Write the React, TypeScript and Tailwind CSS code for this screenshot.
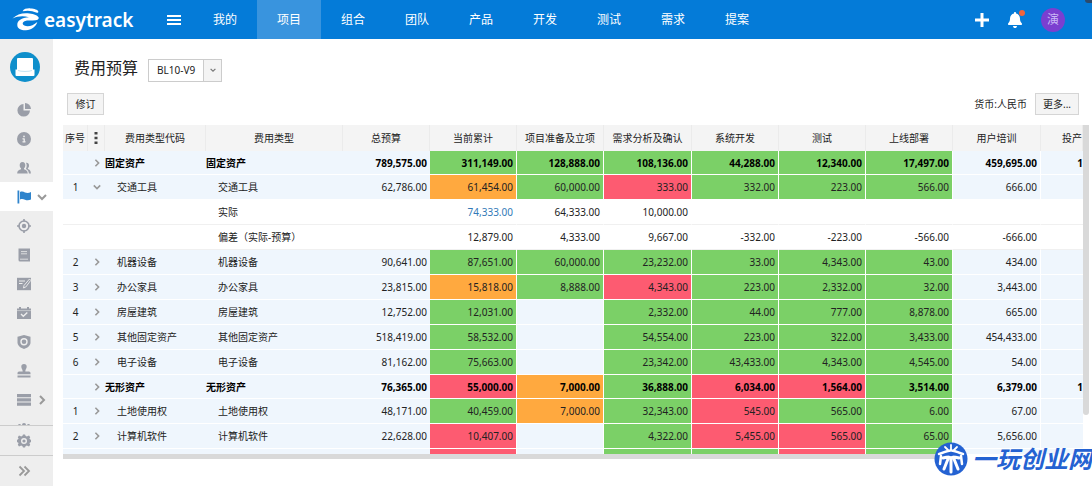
import React from 'react';
import { FaBell, FaCircleInfo } from 'react-icons/fa6';

type Tone = 'g' | 'o' | 'r' | '';

interface BudgetRow {
  kind: 'category' | 'item' | 'detail';
  no?: string;
  name: string;
  open?: boolean;
  total?: string;
  values: string[];
  tones?: Tone[];
  tail?: string;
}

const navItems = ['我的', '项目', '组合', '团队', '产品', '开发', '测试', '需求', '提案'];

const stages = ['当前累计', '项目准备及立项', '需求分析及确认', '系统开发', '测试', '上线部署', '用户培训'];

const rows: BudgetRow[] = [
  { kind: 'category', name: '固定资产', total: '789,575.00', values: ['311,149.00', '128,888.00', '108,136.00', '44,288.00', '12,340.00', '17,497.00', '459,695.00'], tones: ['g', 'g', 'g', 'g', 'g', 'g', ''], tail: '1' },
  { kind: 'item', no: '1', name: '交通工具', open: true, total: '62,786.00', values: ['61,454.00', '60,000.00', '333.00', '332.00', '223.00', '566.00', '666.00'], tones: ['o', 'g', 'r', 'g', 'g', 'g', ''] },
  { kind: 'detail', name: '实际', values: ['74,333.00', '64,333.00', '10,000.00', '', '', '', ''] },
  { kind: 'detail', name: '偏差（实际-预算）', values: ['12,879.00', '4,333.00', '9,667.00', '-332.00', '-223.00', '-566.00', '-666.00'] },
  { kind: 'item', no: '2', name: '机器设备', total: '90,641.00', values: ['87,651.00', '60,000.00', '23,232.00', '33.00', '4,343.00', '43.00', '434.00'], tones: ['g', 'g', 'g', 'g', 'g', 'g', ''] },
  { kind: 'item', no: '3', name: '办公家具', total: '23,815.00', values: ['15,818.00', '8,888.00', '4,343.00', '223.00', '2,332.00', '32.00', '3,443.00'], tones: ['o', 'g', 'r', 'g', 'g', 'g', ''] },
  { kind: 'item', no: '4', name: '房屋建筑', total: '12,752.00', values: ['12,031.00', '', '2,332.00', '44.00', '777.00', '8,878.00', '665.00'], tones: ['g', '', 'g', 'g', 'g', 'g', ''] },
  { kind: 'item', no: '5', name: '其他固定资产', total: '518,419.00', values: ['58,532.00', '', '54,554.00', '223.00', '322.00', '3,433.00', '454,433.00'], tones: ['g', '', 'g', 'g', 'g', 'g', ''] },
  { kind: 'item', no: '6', name: '电子设备', total: '81,162.00', values: ['75,663.00', '', '23,342.00', '43,433.00', '4,343.00', '4,545.00', '54.00'], tones: ['g', '', 'g', 'g', 'g', 'g', ''] },
  { kind: 'category', name: '无形资产', total: '76,365.00', values: ['55,000.00', '7,000.00', '36,888.00', '6,034.00', '1,564.00', '3,514.00', '6,379.00'], tones: ['r', 'o', 'g', 'r', 'r', 'g', ''], tail: '1' },
  { kind: 'item', no: '1', name: '土地使用权', total: '48,171.00', values: ['40,459.00', '7,000.00', '32,343.00', '545.00', '565.00', '6.00', '67.00'], tones: ['g', 'o', 'g', 'r', 'g', 'g', ''] },
  { kind: 'item', no: '2', name: '计算机软件', total: '22,628.00', values: ['10,407.00', '', '4,322.00', '5,455.00', '565.00', '65.00', '5,656.00'], tones: ['r', '', 'g', 'r', 'r', 'g', ''] },
  { kind: 'item', name: '', values: ['', '', '', '', '', '', ''], tones: ['r', '', 'g', 'g', 'r', 'g', ''] },
];

const toneClass = (tone?: Tone) => {
  if (tone === 'g') return 'bg-[#7bd067]';
  if (tone === 'o') return 'bg-[#ffa93f]';
  if (tone === 'r') return 'bg-[#fd5b71]';
  return '';
};

const Chevron: React.FC<{ dir: 'right' | 'down'; className?: string }> = ({ dir, className = '' }) => (
  <svg viewBox="0 0 10 10" className={className} fill="none" stroke="currentColor" strokeWidth="2">
    <path d={dir === 'right' ? 'M3 1l4 4-4 4' : 'M1 3l4 4 4-4'} />
  </svg>
);

/* Sidebar glyphs, all drawn on a 14x14 grid */
const Glyph: React.FC<{ children: React.ReactNode; className?: string }> = ({ children, className = 'text-[#9a9ea8]' }) => (
  <svg viewBox="0 0 14 14" className={`size-3.5 shrink-0 ${className}`} fill="currentColor">
    {children}
  </svg>
);

const sideItems: { label: string; icon: React.ReactNode; active?: boolean; more?: boolean }[] = [
  { label: '概览', icon: <Glyph><path d="M6.5 1A6.3 6.3 0 1 0 13 7.6H6.5z" /><path d="M8 0a6.2 6.2 0 0 1 6 6H8z" /></Glyph> },
  { label: '信息', icon: <FaCircleInfo className="size-3.5 text-[#9a9ea8]" /> },
  { label: '成员', icon: <Glyph><path d="M5.5 1C7.5 1 8.3 2.3 8.3 4.2c0 1.5-.6 2.5-1.3 3.1v1c1.8.6 3.5 1.2 3.8 4.2H.2c.2-3 2-3.6 3.8-4.2v-1C3.3 6.7 2.7 5.7 2.7 4.2 2.7 2.3 3.5 1 5.5 1z" /><path d="M9 1.8c1.9-.3 3 .8 3 2.6 0 1.3-.5 2.2-1.1 2.7v1c1.6.5 2.9 1.4 3 4.4h-2c-.2-2.2-1.1-3.7-3-4.5.9-1.6 1.3-4 .1-6.2z" /></Glyph> },
  { label: '计划', active: true, more: true, icon: <Glyph className="text-[#2f84cc]"><path d="M.5 .5h1.800v13H.5z" /><path d="M3 2c2-1 3.500-.3 5 .4 2 .8 4 .6 6-.4v7.500c-2 .9-4 1-6 .2-1.600-.7-3.200-1-5-.2z" /></Glyph> },
  { label: '目标', icon: <Glyph><circle cx="7" cy="7" r="5" fill="none" stroke="currentColor" strokeWidth="1.6" /><circle cx="7" cy="7" r="2.2" /><path d="M6.2 0h1.6v2.5H6.2zM6.2 11.5h1.6V14H6.2zM0 6.2h2.5v1.6H0zM11.5 6.2H14v1.6h-2.5z" /></Glyph> },
  { label: '文档', icon: <Glyph><path d="M1.500 .5h11.500v13H3a1.500 1.500 0 0 1-1.500-1.500z" /><path d="M4 3.600h6M4 5.800h6M3 11.200h8" stroke="#eeeeee" strokeWidth=".8" /></Glyph> },
  { label: '报告', icon: <Glyph><path d="M0 .8h14v12.400H0z" /><path d="M2 4h6M2 6.500h3.500" stroke="#eeeeee" /><path d="M6.500 11l.5-2.500L12.500 2l1.300 1.300L8.800 10z" stroke="#eeeeee" strokeWidth=".9" /></Glyph> },
  { label: '日程', icon: <Glyph><path d="M0 2.500h2V1h2v1.500h6V1h2v1.500h2V13H0z" /><path d="M0 4.600h14" stroke="#eeeeee" strokeWidth=".5" /><path d="M4 8l2.300 2.200L10.300 6.600" fill="none" stroke="#eeeeee" strokeWidth="1.400" /></Glyph> },
  { label: '风险', icon: <Glyph><path d="M7 0l6.500 1.800V7.500C13.500 11 10 13 7 14 4 13 .5 11 .5 7.500V1.800z" /><circle cx="7" cy="6.800" r="3" fill="none" stroke="#eeeeee" strokeWidth="1.400" /></Glyph> },
  { label: '审批', icon: <Glyph><path d="M7 0a2.700 2.700 0 0 1 2.700 2.700C9.700 4.500 8.300 5 8.300 7.500H12a1.500 1.500 0 0 1 1.500 1.500v1.300H.5V9A1.500 1.500 0 0 1 2 7.500h3.700C5.700 5 4.300 4.500 4.300 2.700A2.700 2.700 0 0 1 7 0zM.5 11.500h13V13.500H.5z" /></Glyph> },
  { label: '费用', more: true, icon: <Glyph><path d="M0 1h14v3.300H0zM0 5.200h14v3.300H0zM0 9.400h14v3.300H0z" /></Glyph> },
  { label: '团队', icon: <Glyph><circle cx="7" cy="3" r="2" /><circle cx="2.5" cy="3.500" r="1.500" /><circle cx="11.5" cy="3.500" r="1.500" /><path d="M1 6h12v6H1z" /></Glyph> },
];

const Logo = () => (
  <a href="#" className="flex w-[155px] shrink-0 items-center gap-1 pl-3 text-white">
    <svg viewBox="0 0 28 23" className="h-[23px] w-7 shrink-0" fill="currentColor">
      <path d="M10.500 3.200C12 .8 15 .2 18.500.4c4 .2 7.200 1.200 7.800 3 .2.9-.4 1.500-1.400 1.400C20 2.600 16 2.200 10.500 3.200z" />
      <path d="M.5 10.500C5 5.800 11 4.600 17.500 5.400c4.500.6 8.500 2 9.200 4.200.4 1.600-1.200 2.500-3.200 2.700-4 .4-8-.3-11 1-2.200 1-2.400 3.200-.2 4.300 3.500 1.500 8.700.4 13-3.600-1.300 4.700-5.800 8-11.300 8.200-4.800.2-8.500-1.500-8.700-5C5 12.500 9.500 9.800 17 9.300 11.500 7.400 5.500 8 .5 10.500z" />
    </svg>
    <span className="text-[19px] leading-6 font-semibold">easytrack</span>
  </a>
);

const TopBar = () => (
  <header className="relative flex h-[39px] shrink-0 items-stretch bg-[#047bd8] text-white">
    <Logo />
    <button aria-label="菜单" className="flex w-[38px] items-center justify-center">
      <svg viewBox="0 0 14 12" className="h-3 w-3.5" fill="currentColor">
        <path d="M0 1h14v2H0zM0 5h14v2H0zM0 9h14v2H0z" />
      </svg>
    </button>
    <nav className="flex text-xs">
      {navItems.map((item) => (
        <a
          key={item}
          href="#"
          className={`flex w-16 items-center justify-center ${item === '项目' ? 'bg-[#3994de]' : ''}`}
        >
          {item}
        </a>
      ))}
    </nav>
    <div className="ml-auto flex items-center gap-[18px] pr-[27px]">
      <button aria-label="新建">
        <svg viewBox="0 0 14 14" className="size-3.5" fill="none" stroke="currentColor" strokeWidth="3">
          <path d="M7 0v14M0 7h14" />
        </svg>
      </button>
      <button aria-label="通知" className="relative">
        <FaBell className="size-4" />
        <span className="absolute -top-0.5 -right-0.5 size-1.5 rounded-full bg-[#f0643c]" />
      </button>
      <button className="flex size-6 items-center justify-center rounded-full bg-[#7b3fd0] text-xs text-[#c9b8f5]">演</button>
    </div>
    <span className="absolute top-0 right-0 h-[3px] w-[7px] rounded-bl bg-[#2c4a6b]" />
  </header>
);

const Sidebar = () => (
  <aside className="flex w-[53px] shrink-0 flex-col bg-[#eeeeee] text-[#999999]">
    <div className="flex h-14 shrink-0 items-center pl-2.5">
      <svg viewBox="0 0 30 30" className="size-[30px]">
        <circle cx="15" cy="15" r="15" fill="#0f8fcb" />
        <path d="M8 6h14a1 1 0 0 1 1 1V17.500h1.500V23a1 1 0 0 1-1 1h-17a1 1 0 0 1-1-1v-5.500H7V7a1 1 0 0 1 1-1z" fill="#fff" />
        <path d="M8 18.500c3 1.300 11 1.300 14 0" fill="none" stroke="#b5dcef" strokeWidth=".8" />
      </svg>
    </div>
    <nav className="min-h-0 flex-1 overflow-hidden">
      {sideItems.map((item) => (
        <a
          key={item.label}
          href="#"
          aria-label={item.label}
          className={`flex h-[29px] items-center gap-1.5 pl-[17px] ${item.active ? 'bg-white' : ''}`}
        >
          {item.icon}
          {item.more && <Chevron dir={item.active ? 'down' : 'right'} className="size-2.5 shrink-0" />}
        </a>
      ))}
    </nav>
    <button aria-label="设置" className="flex h-[30px] shrink-0 items-center border-t border-[#cccccc] pl-[17px]">
      <Glyph>
        <path fillRule="evenodd" d="M5.500 1.800L6 .5h2l.5 1.300 1.300.6L12 1.500l1.200 1.700-.8 1.600L14 6v2l-1.600 1 .8 1.800L12 12.500l-2.200-.9-1.300.6L8 13.500H6l-.5-1.300-1.300-.6-2.200.9-1.200-1.700L1.600 9 0 8V6l1.600-1.200-.8-1.600L2 1.500l2.200.9zM7 4a3 3 0 1 0 0 6 3 3 0 0 0 0-6z" />
        <circle cx="7" cy="7" r="1.600" />
      </Glyph>
    </button>
    <button aria-label="展开" className="flex h-[31px] shrink-0 items-center border-t border-[#cccccc] pl-[17px]">
      <svg viewBox="0 0 14 14" className="size-3.5" fill="none" stroke="currentColor" strokeWidth="1.800">
        <path d="M2.500 2.500L7 7 2.500 11.500M7.500 2.500L12 7l-4.500 4.500" />
      </svg>
    </button>
  </aside>
);

const BudgetTable = () => (
  <table className="w-full table-fixed border-separate border-spacing-0 text-[10px] leading-4">
    <colgroup>
      <col className="w-[25px]" />
      <col className="w-[17px]" />
      <col className="w-[101px]" />
      <col className="w-[137px]" />
      <col className="w-[87px]" />
      <col className="w-[87px]" />
      <col className="w-[87px]" />
      <col className="w-[88px]" />
      <col className="w-[87px]" />
      <col className="w-[87px]" />
      <col className="w-[87px]" />
      <col className="w-[88px]" />
      <col />
    </colgroup>
    <thead>
      <tr className="h-[26px] bg-[#f4f4f4] text-[#222222] *:border-r *:border-[#ebebeb] *:p-0 *:font-normal *:whitespace-nowrap">
        <th>序号</th>
        <th aria-label="列设置">
          <svg viewBox="0 0 4 12" className="mx-auto h-3 w-1" fill="#444444">
            <path d="M.5 0h3v2.600h-3zM.5 4.700h3v2.600h-3zM.5 9.400h3V12h-3z" />
          </svg>
        </th>
        <th>费用类型代码</th>
        <th>费用类型</th>
        <th>总预算</th>
        {stages.map((stage) => (
          <th key={stage}>{stage}</th>
        ))}
        <th className="text-right">投产</th>
      </tr>
    </thead>
    <tbody>
      {rows.map((row, i) => {
        const detail = row.kind === 'detail';
        const category = row.kind === 'category';
        return (
          <tr
            key={i}
            className={`*:border-b *:py-0 *:whitespace-nowrap ${category ? 'h-6 font-bold text-black' : 'h-[25px] text-[#222222]'} ${
              detail ? 'bg-white *:border-b-[#f0f0f0]' : 'bg-[#eff6fd] *:border-white'
            }`}
          >
            <td className="px-0 text-center">{row.no}</td>
            <td className="px-0">
              {!detail && row.name && (
                <Chevron dir={row.open ? 'down' : 'right'} className="mx-auto size-2 text-[#999999]" />
              )}
            </td>
            <td className={category ? 'pl-0' : 'pl-3'}>{!detail && row.name}</td>
            <td className={category ? 'pl-0' : 'pl-3'}>{row.name}</td>
            <td className="pr-[3px] text-right">{row.total}</td>
            {row.values.map((value, n) => (
              <td
                key={stages[n]}
                className={`border-r border-r-white pr-[3px] text-right ${toneClass(row.tones?.[n])}`}
              >
                {row.name === '实际' && n === 0 ? <a href="#" className="text-[#337ab7]">{value}</a> : value}
              </td>
            ))}
            <td className="text-right">{row.tail}</td>
          </tr>
        );
      })}
    </tbody>
  </table>
);

const Watermark = () => (
  <div className="absolute right-0 bottom-2.5 flex items-center gap-1 text-[#2462d2]">
    <svg viewBox="0 0 34 34" className="size-[34px]">
      <circle cx="17" cy="17" r="16.500" fill="currentColor" />
      <g fill="none" stroke="#fff" strokeLinecap="round">
        <path d="M5 12c5-1 7-3.500 12-3.500S24 11 29 12" strokeWidth="2.500" />
        <path d="M11 5l3 3M23 5l-3 3M17 3v5" strokeWidth="1.800" />
        <path d="M7 14l-1 8M27 14l1 8" strokeWidth="2.500" />
        <path d="M9 16c4-1.500 12-1.500 16 0M14 17l-4 10M20 17l4 10M17 17v13" strokeWidth="3" />
      </g>
      <circle cx="17" cy="12" r="2.200" fill="currentColor" />
    </svg>
    <span className="text-2xl leading-8 font-bold italic">一玩创业网</span>
  </div>
);

export default function App() {
  return (
    <div className="relative flex h-screen flex-col overflow-hidden bg-white font-['Noto_Sans','Noto_Sans_CJK_SC',sans-serif] text-[#222222]">
      <TopBar />
      <div className="flex min-h-0 flex-1">
        <Sidebar />
        <main className="flex min-w-0 flex-1 flex-col pl-2.5">
          <div className="flex h-[54px] shrink-0 items-center gap-2.5 pt-1 pl-[11px]">
            <h1 className="text-base leading-6">费用预算</h1>
            <div className="relative mt-1 flex h-[23px] w-[74px] border border-[#cccccc]">
              <select aria-label="版本" className="w-full appearance-none pr-5 pl-2 text-[10px] leading-4 outline-none">
                <option>BL10-V9</option>
              </select>
              <span className="pointer-events-none absolute inset-y-0 right-0 flex w-[18px] items-center justify-center border-l border-[#cccccc] bg-[#f4f4f4]">
                <Chevron dir="down" className="size-1.5 text-[#777777]" />
              </span>
            </div>
          </div>
          <div className="flex h-8 shrink-0 items-start justify-between pr-[13px] pl-1 text-[10px]">
            <button className="h-[22px] w-[37px] border border-[#d5d5d5] bg-[#f4f4f4]">修订</button>
            <div className="flex items-center gap-2">
              <span>货币:人民币</span>
              <button className="h-[22px] w-11 border border-[#d5d5d5] bg-[#f4f4f4]">更多...</button>
            </div>
          </div>
          <div className="mb-8 flex min-h-0 flex-1 flex-col">
            <div className="flex min-h-0 flex-1 pr-[3px]">
              <div className="min-w-0 flex-1 overflow-hidden">
                <BudgetTable />
              </div>
              <div className="h-[88%] w-1.5 rounded-b bg-[#d9d9d9]" />
            </div>
            {/* horizontal scroll thumb */}
            <div className="-mb-[5px] h-[5px] w-[86%] shrink-0 bg-[#d9d9d9]" />
          </div>
        </main>
      </div>
      <Watermark />
    </div>
  );
}
